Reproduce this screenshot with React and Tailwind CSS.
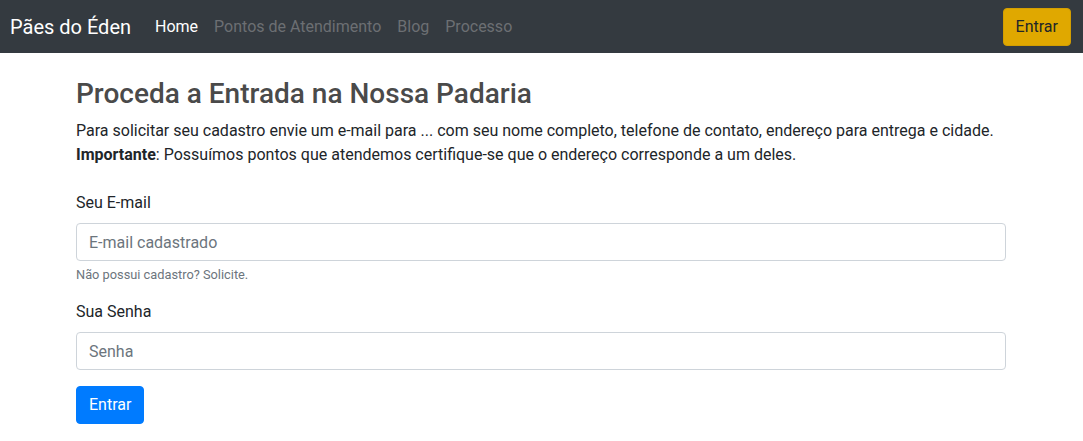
import React from 'react';

const font = { fontFamily: 'Roboto, "Liberation Sans", sans-serif' };

const NavBar = () => (
  <nav className="flex h-[53px] items-center justify-between bg-[#343a40] px-[10px]">
    <div className="flex items-center">
      <a className="mr-[24px] text-[20px] leading-[30px] text-white">Pães do Éden</a>
      <ul className="flex gap-[16px] text-[16px] leading-[24px]">
        <li className="text-white">Home</li>
        <li className="text-[#6c6f73]">Pontos de Atendimento</li>
        <li className="text-[#6c6f73]">Blog</li>
        <li className="text-[#6c6f73]">Processo</li>
      </ul>
    </div>
    <button className="mr-[2px] h-[38px] rounded-[4px] border border-[#d39e00] bg-[#e0a800] px-[12px] text-[16px] text-[#212529]">
      Entrar
    </button>
  </nav>
);

export default function App() {
  return (
    <div className="min-h-[441px] bg-white text-[16px] text-[#212529]" style={font}>
      <NavBar />
      <main className="mx-auto w-[960px] pt-[24px] pr-[15.5px] pl-[14.5px]">
        <h3 className="mb-[8px] text-[28px] leading-[34px] font-medium text-[#4a4a4a]">
          Proceda a Entrada na Nossa Padaria
        </h3>
        <p className="mb-[24px] leading-[24px]">
          Para solicitar seu cadastro envie um e-mail para ... com seu nome completo, telefone de contato, endereço para entrega e cidade.
          <br />
          <b className="font-bold">Importante</b>: Possuímos pontos que atendemos certifique-se que o endereço corresponde a um deles.
        </p>
        <form>
          <div className="mb-[16px]">
            <label className="mb-[8px] block leading-[24px]">Seu E-mail</label>
            <input
              type="email"
              placeholder="E-mail cadastrado"
              className="block h-[38px] w-full rounded-[4px] border border-[#ced4da] px-[12px] text-[16px] placeholder:text-[#6c757d]"
            />
            <small className="mt-[4px] block text-[12.8px] leading-[19px] text-[#6c757d]">
              Não possui cadastro? Solicite.
            </small>
          </div>
          <div className="mb-[16px]">
            <label className="mb-[8px] block leading-[24px]">Sua Senha</label>
            <input
              type="password"
              placeholder="Senha"
              className="block h-[38px] w-full rounded-[4px] border border-[#ced4da] px-[12px] text-[16px] placeholder:text-[#6c757d]"
            />
          </div>
          <button type="button" className="h-[38px] rounded-[4px] border border-[#007bff] bg-[#007bff] px-[12px] text-[16px] text-white">
            Entrar
          </button>
        </form>
      </main>
    </div>
  );
}
